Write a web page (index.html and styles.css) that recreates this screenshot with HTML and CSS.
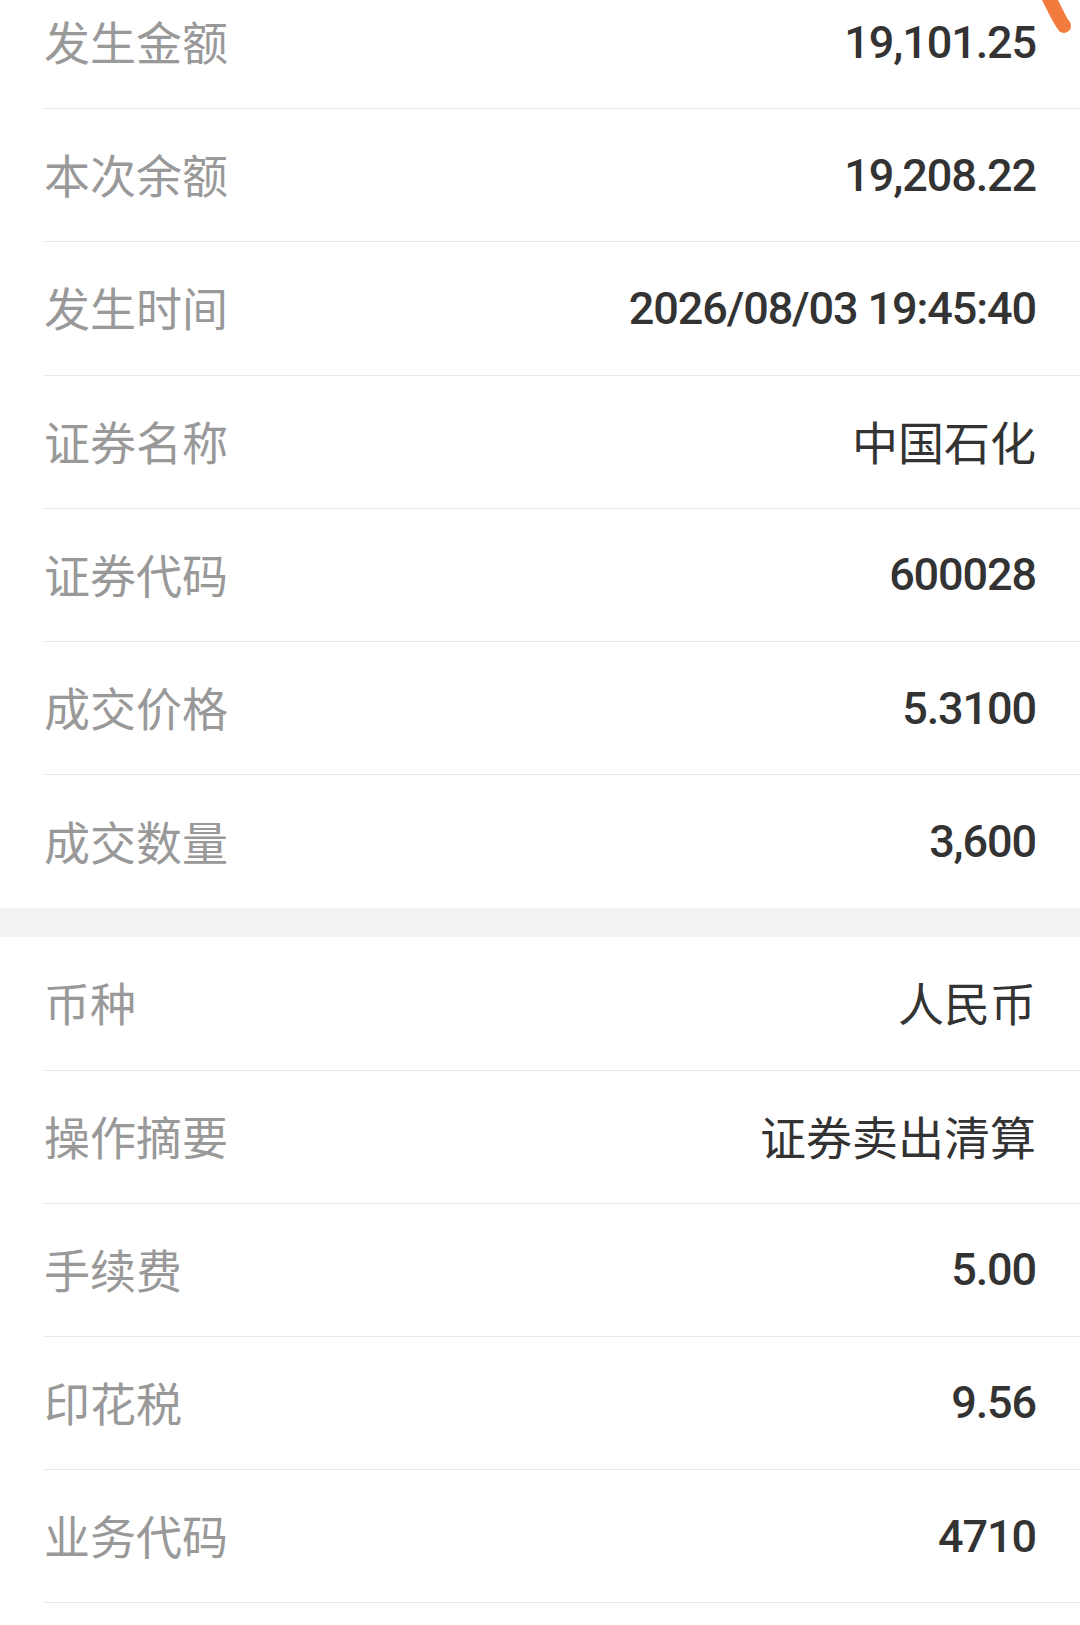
FILE: index.html
```html
<!DOCTYPE html>
<html lang="zh-CN">
<head>
  <meta charset="UTF-8">
  <title>交易明细</title>
  <link rel="stylesheet" href="styles.css">
</head>
<body>
  <div class="page">
    <!-- 成交信息 -->
    <div class="section section-first">
      <div class="row"><span class="label">发生金额</span><span class="value num">19,101.25</span></div>
      <div class="row"><span class="label">本次余额</span><span class="value num">19,208.22</span></div>
      <div class="row"><span class="label">发生时间</span><span class="value num">2026/08/03 19:45:40</span></div>
      <div class="row"><span class="label">证券名称</span><span class="value">中国石化</span></div>
      <div class="row"><span class="label">证券代码</span><span class="value num">600028</span></div>
      <div class="row"><span class="label">成交价格</span><span class="value num">5.3100</span></div>
      <div class="row"><span class="label">成交数量</span><span class="value num">3,600</span></div>
    </div>

    <div class="gap"></div>

    <!-- 其他信息 -->
    <div class="section">
      <div class="row"><span class="label">币种</span><span class="value">人民币</span></div>
      <div class="row"><span class="label">操作摘要</span><span class="value">证券卖出清算</span></div>
      <div class="row"><span class="label">手续费</span><span class="value num">5.00</span></div>
      <div class="row"><span class="label">印花税</span><span class="value num">9.56</span></div>
      <div class="row"><span class="label">业务代码</span><span class="value num">4710</span></div>
    </div>

    <svg class="mark" width="40" height="44" viewBox="0 0 40 44">
      <path d="M8 -20 L 18 0 L 25 14 Q 28 20 30 22 Q 33 29 27 32 Q 21 35 17 28 Q 13 22 9 14 L -2 -8 Z" fill="#f47b3e"/>
    </svg>
  </div>
</body>
</html>
```

FILE: styles.css
```css
body {
  margin: 0;
  background: #fff;
  font-family: "Noto Sans CJK SC", "Noto Sans", sans-serif;
  overflow: hidden;
}
.page {
  position: relative;
  display: flow-root;
  width: 1080px;
}
.section {
  background: #fff;
}
.section-first {
  margin-top: -24px;
}
.row {
  display: flex;
  justify-content: space-between;
  align-items: center;
  height: 133.2px;
  box-sizing: border-box;
  margin-left: 44px;
  padding-right: 44px;
  border-bottom: 1px solid #e8e8e8;
}
.section-first .row:last-child {
  border-bottom: none;
}
.label {
  font-size: 46px;
  color: #999;
  line-height: 1;
  margin-top: -4px;
}
.value {
  font-size: 46px;
  color: #333;
  line-height: 1;
  margin-top: -4px;
}
.value.num {
  font-family: "Roboto", sans-serif;
  font-weight: 500;
  font-size: 45px;
  letter-spacing: -1.1px;
  margin-top: 0;
  color: #333;
}
.gap {
  height: 29px;
  background: #f2f2f4;
}
.mark {
  position: absolute;
  top: 0;
  left: 1040px;
}
```
